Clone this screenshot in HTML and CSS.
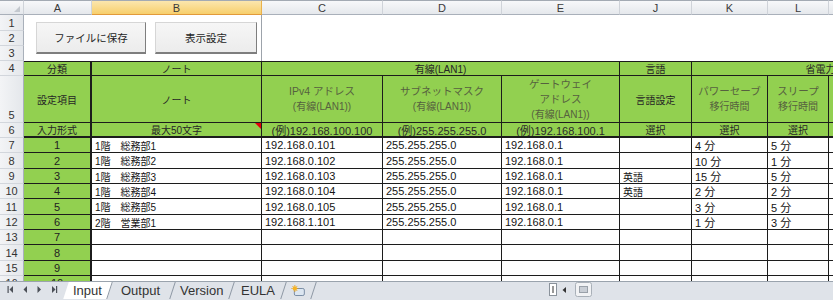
FILE: index.html
```html
<!DOCTYPE html>
<html lang="ja">
<head>
<meta charset="utf-8">
<title>Sheet</title>
<link rel="stylesheet" href="styles.css">
</head>
<body>
<div class="sheet">
  <div class="grid">
    <div class="ch corner"></div>
    <div class="ch">A</div><div class="ch sel">B</div><div class="ch">C</div><div class="ch">D</div><div class="ch">E</div><div class="ch">J</div><div class="ch">K</div><div class="ch">L</div><div class="ch">M</div>

    <div class="rh">1</div>
    <div class="btnarea"><button class="btn b1">ファイルに保存</button><button class="btn b2">表示設定</button></div>
    <div class="blank"></div>
    <div class="rh">2</div>
    <div class="rh">3</div>

    <div class="rh">4</div>
    <div class="c h top colA">分類</div>
    <div class="c h top">ノート</div>
    <div class="c h top s3">有線(LAN1)</div>
    <div class="c h top">言語</div>
    <div class="c h top s3">省電力設定</div>

    <div class="rh">5</div>
    <div class="c h colA">設定項目</div>
    <div class="c h">ノート</div>
    <div class="c h multi olive"><span class="l1">IPv4 アドレス</span><span class="l2">(有線(LAN1))</span></div>
    <div class="c h multi olive"><span class="l1">サブネットマスク</span><span class="l2">(有線(LAN1))</span></div>
    <div class="c h multi three olive"><span class="l1">ゲートウェイ</span><span class="l1">アドレス</span><span class="l2">(有線(LAN1))</span></div>
    <div class="c h">言語設定</div>
    <div class="c h multi olive"><span class="l1">パワーセーブ</span><span class="l2">移行時間</span></div>
    <div class="c h multi olive"><span class="l1">スリープ</span><span class="l2">移行時間</span></div>
    <div class="c h"></div>

    <div class="rh">6</div>
    <div class="c h r6 colA">入力形式</div>
    <div class="c h r6 cmt">最大50文字</div>
    <div class="c h r6 lat">(例)192.168.100.100</div>
    <div class="c h r6 lat">(例)255.255.255.0</div>
    <div class="c h r6 lat">(例)192.168.100.1</div>
    <div class="c h r6">選択</div>
    <div class="c h r6">選択</div>
    <div class="c h r6">選択</div>
    <div class="c h r6"></div>

    <div class="rh">7</div>
    <div class="c g colA">1</div><div class="c t jp">1階　総務部1</div><div class="c t">192.168.0.101</div><div class="c t">255.255.255.0</div><div class="c t">192.168.0.1</div><div class="c t jp"></div><div class="c t">4 分</div><div class="c t">5 分</div><div class="c t"></div>

    <div class="rh">8</div>
    <div class="c g colA">2</div><div class="c t jp">1階　総務部2</div><div class="c t">192.168.0.102</div><div class="c t">255.255.255.0</div><div class="c t">192.168.0.1</div><div class="c t jp"></div><div class="c t">10 分</div><div class="c t">1 分</div><div class="c t"></div>

    <div class="rh">9</div>
    <div class="c g colA">3</div><div class="c t jp">1階　総務部3</div><div class="c t">192.168.0.103</div><div class="c t">255.255.255.0</div><div class="c t">192.168.0.1</div><div class="c t jp">英語</div><div class="c t">15 分</div><div class="c t">5 分</div><div class="c t"></div>

    <div class="rh">10</div>
    <div class="c g colA">4</div><div class="c t jp">1階　総務部4</div><div class="c t">192.168.0.104</div><div class="c t">255.255.255.0</div><div class="c t">192.168.0.1</div><div class="c t jp">英語</div><div class="c t">2 分</div><div class="c t">2 分</div><div class="c t"></div>

    <div class="rh">11</div>
    <div class="c g colA">5</div><div class="c t jp">1階　総務部5</div><div class="c t">192.168.0.105</div><div class="c t">255.255.255.0</div><div class="c t">192.168.0.1</div><div class="c t jp"></div><div class="c t">3 分</div><div class="c t">5 分</div><div class="c t"></div>

    <div class="rh">12</div>
    <div class="c g colA">6</div><div class="c t jp">2階　営業部1</div><div class="c t">192.168.1.101</div><div class="c t">255.255.255.0</div><div class="c t">192.168.0.1</div><div class="c t jp"></div><div class="c t">1 分</div><div class="c t">3 分</div><div class="c t"></div>

    <div class="rh">13</div>
    <div class="c g colA">7</div><div class="c t"></div><div class="c t"></div><div class="c t"></div><div class="c t"></div><div class="c t"></div><div class="c t"></div><div class="c t"></div><div class="c t"></div>

    <div class="rh">14</div>
    <div class="c g colA">8</div><div class="c t"></div><div class="c t"></div><div class="c t"></div><div class="c t"></div><div class="c t"></div><div class="c t"></div><div class="c t"></div><div class="c t"></div>

    <div class="rh">15</div>
    <div class="c g colA">9</div><div class="c t"></div><div class="c t"></div><div class="c t"></div><div class="c t"></div><div class="c t"></div><div class="c t"></div><div class="c t"></div><div class="c t"></div>

    <div class="rh">16</div>
    <div class="c g colA">10</div><div class="c t"></div><div class="c t"></div><div class="c t"></div><div class="c t"></div><div class="c t"></div><div class="c t"></div><div class="c t"></div><div class="c t"></div>
  </div>
</div>

<div class="tabbar">
  <svg class="nav" width="66" height="17" viewBox="0 0 66 17">
    <rect x="7.5" y="4" width="1.2" height="7" fill="#4a4f57"/>
    <polygon points="13,4 9.5,7.5 13,11" fill="#4a4f57"/>
    <polygon points="27,4 23.5,7.5 27,11" fill="#4a4f57"/>
    <polygon points="37.5,4 41,7.5 37.5,11" fill="#4a4f57"/>
    <polygon points="52,4 55.5,7.5 52,11" fill="#4a4f57"/>
    <rect x="56" y="4" width="1.2" height="7" fill="#4a4f57"/>
  </svg>
  <div class="tabs">
    <div class="tab active w1"><span>Input</span></div>
    <div class="tab w2"><span>Output</span></div>
    <div class="tab w3"><span>Version</span></div>
    <div class="tab w4"><span>EULA</span></div>
    <div class="tab w5"><span><svg width="15" height="12" viewBox="0 0 15 12">
      <rect x="3.5" y="3.5" width="10" height="7" rx="1.5" fill="#dce6f1" stroke="#7b8ea6"/>
      <circle cx="4" cy="3.5" r="2.2" fill="#f5b324"/>
      <path d="M4 0v1.2M4 5.8v1.2M0.5 3.5h1.2M6.3 3.5h1.2M1.6 1.1l.8.8M5.6 5.1l.8.8M6.4 1.1l-.8.8" stroke="#e89b10" stroke-width="0.8"/>
    </svg></span></div>
  </div>
  <svg class="hs" width="45" height="17" viewBox="0 0 45 17">
    <rect x="1.5" y="1.5" width="7" height="12" fill="#fff" stroke="#8a929b"/>
    <rect x="4.5" y="4" width="1" height="7" fill="#333"/>
    <polygon points="18,5 14.5,8 18,11" fill="#333"/>
    <rect x="27.5" y="0.5" width="16" height="14" rx="2" fill="#f1f2f4" stroke="#a9b0b8"/>
    <rect x="31.5" y="4.5" width="8" height="6" fill="#c9ced5" stroke="#9aa1a9"/>
  </svg>
</div>
</body>
</html>
```

FILE: styles.css
```css
* { box-sizing: border-box; margin: 0; padding: 0; }
html, body { width: 833px; height: 300px; overflow: hidden; background: #fff; }
body {
  font-family: "Liberation Sans", "Noto Sans CJK JP", sans-serif;
  font-size: 11px;
  color: #111;
}

.sheet { width: 833px; height: 281px; overflow: hidden; }

.grid {
  display: grid;
  width: 970px;
  grid-template-columns: 24px 68px 170px 121px 119px 118px 72px 76px 61px 141px;
  grid-template-rows: 15px 16px 15px 15px 15px 47px 15px 15px 16px 15px 15px 16px 15px 15px 16px 15px 15px;
}

/* column headers */
.ch {
  display: flex;
  align-items: center;
  justify-content: center;
  background: linear-gradient(#f7f8fa, #e5e8ec);
  border-top: 1px solid #a3aab3;
  border-right: 1px solid #cfd3d9;
  border-bottom: 1px solid #a9b0ba;
  color: #3a3a3a;
  font-size: 11px;
}
.ch.sel {
  background: linear-gradient(#fbe6ae, #f7cf6c);
  border-right-color: #eab24c;
  border-bottom-color: #e29a3a;
}
.corner { position: relative; }
.corner::after {
  content: "";
  position: absolute;
  right: 3px;
  bottom: 2px;
  border-left: 6px solid transparent;
  border-bottom: 6px solid #c3c8ce;
}

/* row headers */
.rh {
  display: flex;
  align-items: flex-end;
  justify-content: center;
  background: linear-gradient(90deg, #f3f4f6, #e4e7eb);
  border-right: 1px solid #a9b0ba;
  border-bottom: 1px solid #d2d6dc;
  color: #333;
  font-size: 11px;
  line-height: 14px;
}

/* button area rows 1-3 */
.btnarea {
  grid-column: span 2;
  grid-row: span 3;
  display: flex;
  gap: 9px;
  padding: 7px 0 0 12px;
  border-right: 1px solid #9da3ab;
}
.blank { grid-column: span 7; grid-row: span 3; }
.btn {
  height: 32px;
  font-family: "Liberation Sans", "Noto Sans CJK JP", sans-serif;
  font-size: 10.5px;
  color: #1e1e1e;
  background: linear-gradient(#f6f6f6, #ececec);
  border-top: 1px solid #d6d6d6;
  border-left: 1px solid #d6d6d6;
  border-right: 1px solid #7e7e7e;
  border-bottom: 2px solid #7e7e7e;
}
.b1 { width: 110px; }
.b2 { width: 102px; }

/* cells */
.c {
  display: flex;
  align-items: center;
  overflow: hidden;
  white-space: nowrap;
  border-right: 1px solid #1c1c1c;
  border-bottom: 1px solid #1c1c1c;
}
.top { border-top: 1px solid #1c1c1c; }
.s3 { grid-column: span 3; }
.colA { border-right-width: 2px; }
.r6 { border-bottom-width: 2px; }

.h {
  background: #92d050;
  justify-content: center;
  text-align: center;
  font-size: 10px;
  color: #262626;
}
.h.lat { font-size: 11px; color: #2a2a2a; }
.multi { flex-direction: column; line-height: 16px; }
.multi.three { line-height: 15px; }
.multi .l1 { font-size: 10.5px; }
.multi .l2 { font-size: 10px; }
.olive { color: #56613f; }

.cmt { position: relative; }
.cmt::after {
  content: "";
  position: absolute;
  top: 0;
  right: 0;
  border-top: 6px solid #e3000b;
  border-left: 6px solid transparent;
}

.g {
  background: #92d050;
  justify-content: center;
  color: #222;
}
.t { padding-left: 3px; color: #141414; }
.jp { font-size: 10px; }

/* tab bar */
.tabbar {
  height: 19px;
  display: flex;
  align-items: flex-start;
  background: #dfe3e9;
  border-top: 1px solid #9aa3ad;
}
.nav { flex: none; }
.tabs { display: flex; height: 17px; }
.tab {
  height: 17px;
  display: flex;
  align-items: center;
  justify-content: center;
  transform: skewX(-18deg);
  border-right: 1px solid #8e98a4;
  font-size: 13px;
  color: #333;
}
.tab span { display: flex; align-items: center; transform: skewX(18deg); }
.tab.active { background: #fff; }
.w1 { width: 44px; }
.w2 { width: 63px; }
.w3 { width: 59px; }
.w4 { width: 52px; }
.w5 { width: 30px; }
.hs { flex: none; margin-left: 234px; }
```
